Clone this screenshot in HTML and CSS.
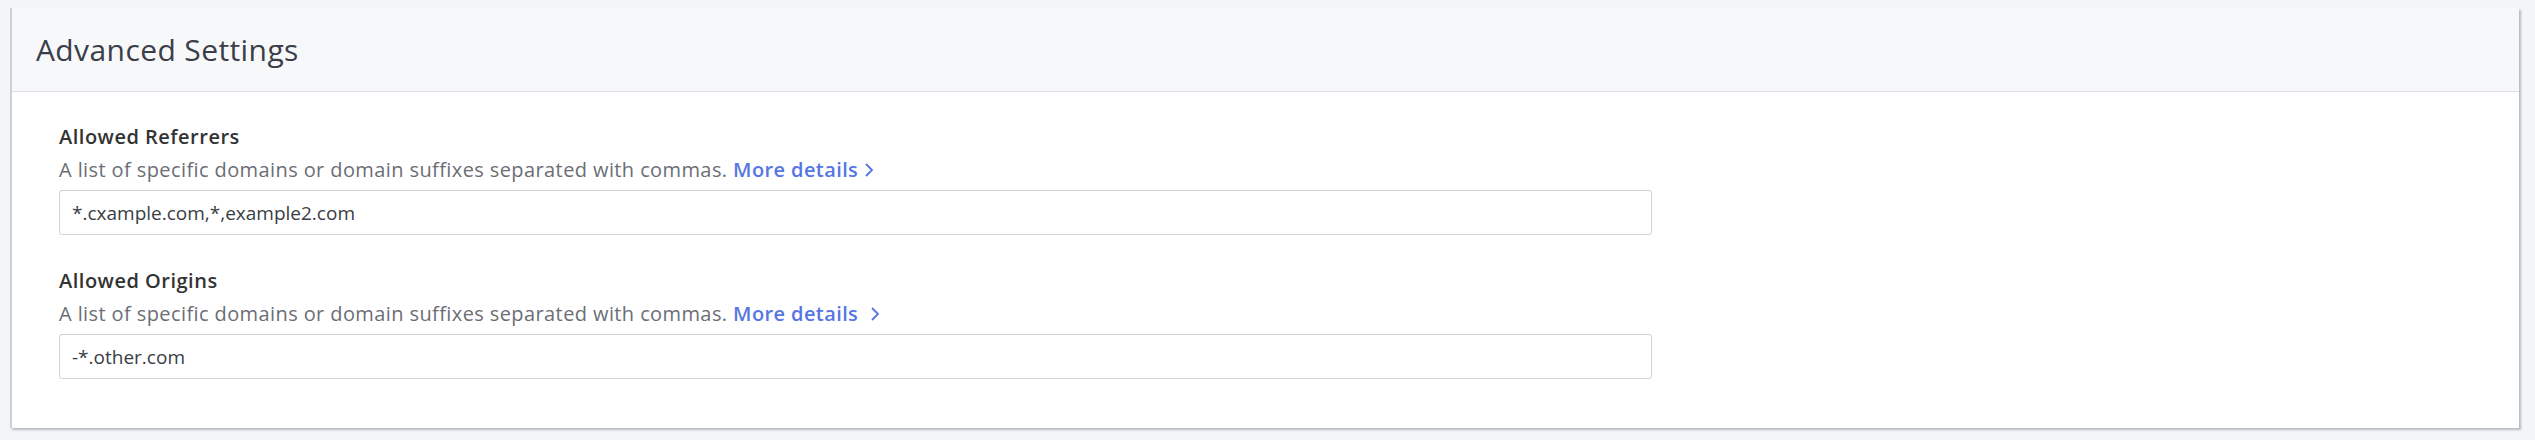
FILE: index.html
```html
<!DOCTYPE html>
<html lang="en">
<head>
<meta charset="UTF-8" />
<meta name="viewport" content="width=device-width, initial-scale=1" />
<title>Advanced Settings</title>
<link rel="stylesheet" href="styles.css">
</head>
<body>

<div class="card">
  <div class="card-header">
    <h2>Advanced Settings</h2>
  </div>
  <div class="card-body">
    <div class="field">
      <label for="referrers">Allowed Referrers</label>
      <p class="hint">A list of specific domains or domain suffixes separated with commas. <a href="#">More details<span class="chev"><svg width="10" height="16" viewBox="0 0 10 16"><path d="M2 2l6 6-6 6" fill="none" stroke="currentColor" stroke-width="1.8"/></svg></span></a></p>
      <input id="referrers" type="text" value="*.cxample.com,*,example2.com">
    </div>
    <div class="field">
      <label for="origins">Allowed Origins</label>
      <p class="hint">A list of specific domains or domain suffixes separated with commas. <a href="#">More details <span class="chev"><svg width="10" height="16" viewBox="0 0 10 16"><path d="M2 2l6 6-6 6" fill="none" stroke="currentColor" stroke-width="1.8"/></svg></span></a></p>
      <input id="origins" type="text" value="-*.other.com">
    </div>
  </div>
</div>

</body>
</html>
```

FILE: styles.css
```css
body {
  margin: 0;
  padding: 8px 16px 11px 10px;
  background: #f4f5f7;
  font-family: "Open Sans", "Noto Sans", sans-serif;
  color: #333;
}
.card {
  background: white;
  border-left: 2px solid #ccd0d5;
  box-shadow: 2px 2px 2px rgba(70, 80, 90, 0.35);
}
.card-header {
  height: 83px;
  display: flex;
  align-items: center;
  padding-left: 24px;
  background: #f7f8fa;
  border-bottom: 1px solid #dde1e6;
}
h2 {
  margin: 0;
  font-size: 30px;
  font-weight: 400;
  letter-spacing: 0.4px;
  color: #3b3e48;
}
.card-body {
  padding: 31px 48px 49px 47px;
}
.field + .field {
  margin-top: 32px;
}
label {
  display: block;
  font-size: 20px;
  line-height: 28px;
  font-weight: 600;
  letter-spacing: 0.5px;
  color: #333;
}
.hint {
  margin: 5px 0 5px;
  font-size: 20px;
  line-height: 28px;
  letter-spacing: 0.4px;
  color: #6b6e75;
}
.hint a {
  color: #5676e4;
  font-weight: 600;
  text-decoration: none;
}
.chev {
  display: inline-block;
  margin-left: 6px;
  vertical-align: -1px;
}
input {
  display: block;
  box-sizing: border-box;
  width: 1593px;
  height: 45px;
  padding: 0 12px;
  border: 1px solid #cfd3d9;
  border-radius: 3px;
  font-family: inherit;
  font-size: 19px;
  color: #3a3d44;
}
```
